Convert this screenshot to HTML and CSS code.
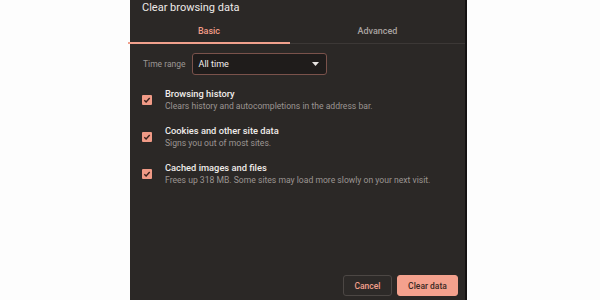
FILE: index.html
```html
<!DOCTYPE html>
<html lang="en">
<head>
    <meta charset="UTF-8">
    <meta name="viewport" content="width=device-width, initial-scale=1.0">
    <title>Clear browsing data</title>
    <link rel="stylesheet" href="styles.css">
</head>
<body>
    <div id="dialog">
        <div class="title">Clear browsing data</div>

        <div class="tabs">
            <div class="tab active">Basic</div>
            <div class="tab">Advanced</div>
        </div>

        <div class="range-row">
            <span class="range-label">Time range</span>
            <div class="select">
                <span>All time</span>
                <svg class="arrow" width="7" height="4" viewBox="0 0 7 4"><path d="M0 0h7L3.5 4z" fill="#e8e4e2"/></svg>
            </div>
        </div>

        <div class="options">
            <div class="option">
                <span class="checkbox">
                    <svg width="8" height="8" viewBox="0 0 8 8"><path d="M1.3 4.2l1.8 1.8 3.6-4" fill="none" stroke="#3a221d" stroke-width="1.4"/></svg>
                </span>
                <div class="option-text">
                    <div class="option-title">Browsing history</div>
                    <div class="option-desc">Clears history and autocompletions in the address bar.</div>
                </div>
            </div>
            <div class="option">
                <span class="checkbox">
                    <svg width="8" height="8" viewBox="0 0 8 8"><path d="M1.3 4.2l1.8 1.8 3.6-4" fill="none" stroke="#3a221d" stroke-width="1.4"/></svg>
                </span>
                <div class="option-text">
                    <div class="option-title">Cookies and other site data</div>
                    <div class="option-desc">Signs you out of most sites.</div>
                </div>
            </div>
            <div class="option">
                <span class="checkbox">
                    <svg width="8" height="8" viewBox="0 0 8 8"><path d="M1.3 4.2l1.8 1.8 3.6-4" fill="none" stroke="#3a221d" stroke-width="1.4"/></svg>
                </span>
                <div class="option-text">
                    <div class="option-title">Cached images and files</div>
                    <div class="option-desc">Frees up 318 MB. Some sites may load more slowly on your next visit.</div>
                </div>
            </div>
        </div>

        <div class="actions">
            <button class="btn cancel">Cancel</button>
            <button class="btn primary">Clear data</button>
        </div>
    </div>
</body>
</html>
```

FILE: styles.css
```css
body {
    margin: 0;
    height: 300px;
    background-color: #fdfdfd;
    font-family: Roboto, "Liberation Sans", Arial, sans-serif;
}

#dialog {
    margin-left: 130px;
    width: 335px;
    height: 300px;
    display: flex;
    flex-direction: column;
    background: #2b2826;
    border-right: 2px solid #141212;
    color: #e8e4e2;
}

.title {
    height: 18px;
    padding-left: 12px;
    font-size: 11px;
    line-height: 16px;
    color: #eeeae8;
}

.tabs {
    display: flex;
    border-bottom: 1px solid #3c3836;
}

.tab {
    flex: 1;
    text-align: center;
    padding: 7px 0 5px;
    font-size: 9px;
    line-height: 12px;
    font-weight: 500;
    color: #a9a4a1;
    border-bottom: 2px solid transparent;
    margin-bottom: -1px;
}

.tab.active {
    flex: 0 0 162px;
    margin-left: -2px;
    color: #f29c86;
    border-bottom-color: #f0a08c;
}

.range-row {
    display: flex;
    align-items: center;
    gap: 6px;
    margin-top: 9px;
    padding-left: 13px;
}

.range-label {
    font-size: 8.5px;
    color: #9c9794;
}

.select {
    width: 135px;
    height: 22px;
    box-sizing: border-box;
    display: flex;
    align-items: center;
    justify-content: space-between;
    padding: 0 7px 0 6px;
    border: 1.5px solid #7a524b;
    border-radius: 3px;
    background: #1f1c1b;
    font-size: 9px;
    color: #f2eeec;
}

.options {
    margin-top: 13px;
    padding-left: 12px;
    display: flex;
    flex-direction: column;
    gap: 13px;
}

.option {
    display: flex;
    align-items: center;
    gap: 13px;
}

.checkbox {
    width: 10px;
    height: 10px;
    display: flex;
    align-items: center;
    justify-content: center;
    background: #f09a86;
    border-radius: 1px;
}

.option-title {
    font-size: 9.3px;
    line-height: 12px;
    font-weight: 500;
    color: #f0ecea;
}

.option-desc {
    font-size: 8.6px;
    line-height: 12px;
    color: #9b9592;
}

.actions {
    margin-top: auto;
    display: flex;
    justify-content: flex-end;
    gap: 5px;
    padding: 0 7px 4px 0;
}

.btn {
    height: 21px;
    border-radius: 3px;
    font-family: inherit;
    font-size: 8.5px;
    font-weight: 500;
    cursor: pointer;
}

.btn.cancel {
    width: 49px;
    background: #2d2a28;
    border: 1px solid #4c4744;
    color: #f4a08c;
}

.btn.primary {
    width: 61px;
    background: #f4a18d;
    border: 1px solid #f4a18d;
    color: #3b2924;
}
```
